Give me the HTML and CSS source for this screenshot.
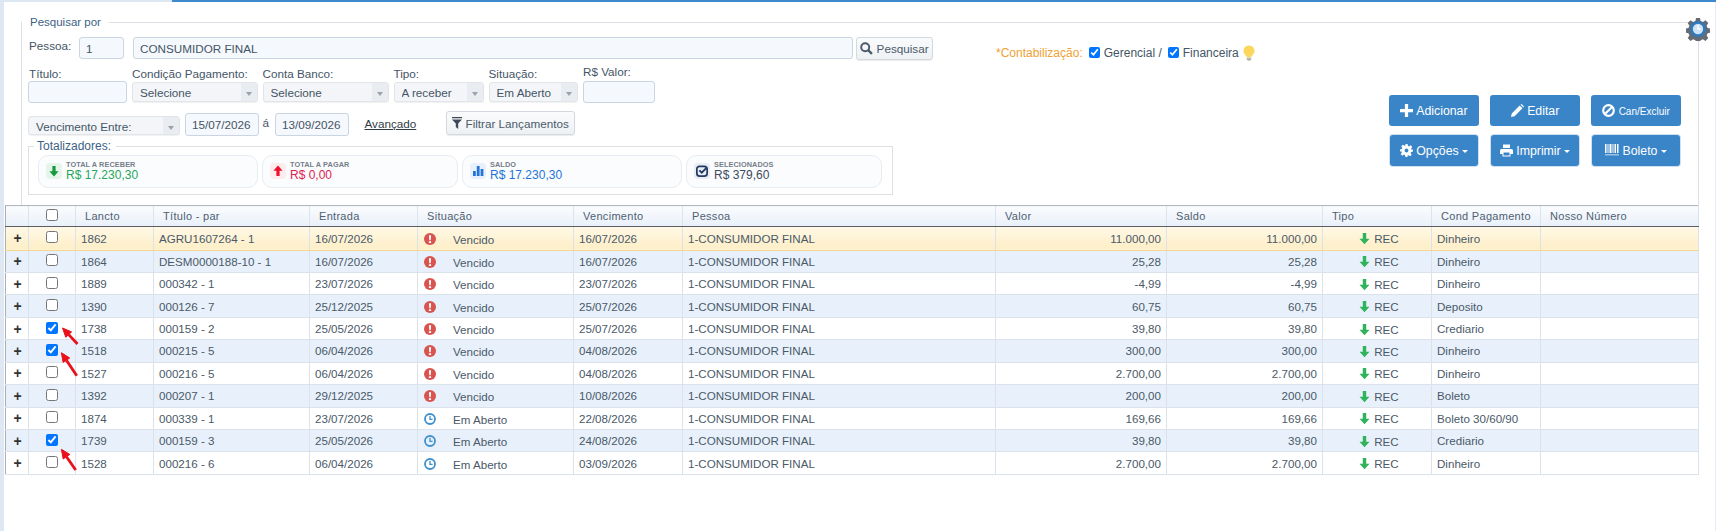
FILE: index.html
```html
<!DOCTYPE html>
<html lang="pt-BR">
<head>
    <meta charset="UTF-8" />
    <meta name="viewport" content="width=device-width, initial-scale=1.0" />
    <title>Lançamentos</title>
    <link rel="stylesheet" href="styles.css">
</head>
<body>
    <svg class="sprite" xmlns="http://www.w3.org/2000/svg">
        <symbol id="i-down" viewBox="0 0 12 12"><path d="M4.4 1h3.2v5.2h3L6 11.4 1.400 6.200h3z"/></symbol>
        <symbol id="i-up" viewBox="0 0 12 12"><path d="M4.400 11h3.200V5.800h3L6 .6 1.400 5.800h3z"/></symbol>
        <symbol id="i-bars" viewBox="0 0 12 12"><path d="M1 6h2.800v5H1zM4.800 1h2.800v10H4.800zM8.600 4h2.800v7H8.600z"/></symbol>
        <symbol id="i-checkbox" viewBox="0 0 14 14"><path d="M5 1.500h4.500A3.500 3.500 0 0 1 13 5v4.500A3.500 3.500 0 0 1 9.500 13H4.500A3.500 3.500 0 0 1 1 9.500V4.500A3 3 0 0 1 4 1.500z" fill="none" stroke="currentColor" stroke-width="2"/><path d="M4 6.200l2.700 2.700L12.500 3" fill="none" stroke="currentColor" stroke-width="2.200"/></symbol>
        <symbol id="i-alert" viewBox="0 0 12 12"><circle cx="6" cy="6" r="6" fill="#d9534f"/><path d="M4.900 2.300h2.200L6.700 7.200H5.300zM4.900 8.200h2.200v1.700H4.900z" fill="#fff"/></symbol>
        <symbol id="i-clock" viewBox="0 0 12 12"><circle cx="6" cy="6" r="5" fill="none" stroke="#3f90cf" stroke-width="1.800"/><path d="M6 3v3.300h2.600" fill="none" stroke="#3f90cf" stroke-width="1.300"/></symbol>
        <symbol id="i-plus" viewBox="0 0 12 12"><path d="M4.500 0h3v4.500H12v3H7.500V12h-3V7.500H0v-3h4.500z"/></symbol>
        <symbol id="i-pencil" viewBox="0 0 12 12"><path d="M0 12l.7-3.300L8 1.400 10.600 4 3.300 11.300zM8.800.6l1-.6 2.200 2.200-.6 1z"/></symbol>
        <symbol id="i-ban" viewBox="0 0 12 12"><circle cx="6" cy="6" r="4.900" fill="none" stroke="currentColor" stroke-width="2"/><path d="M2.700 9.300l6.600-6.600" stroke="currentColor" stroke-width="2"/></symbol>
        <symbol id="i-gear" viewBox="0 0 12 12"><path fill-rule="evenodd" d="M5 0h2l.3 1.700 1.100.5L9.900 1.200l1.400 1.400-1 1.500.5 1.100L12 5v2l-1.700.3-.5 1.100 1 1.500-1.400 1.400-1.500-1-1.100.5L7 12H5l-.3-1.700-1.100-.5-1.500 1L.7 9.400l1-1.500-.5-1.100L0 7V5l1.700-.3.5-1.100-1-1.500L2.600 .7l1.500 1 1.100-.5zM6 4.200a1.800 1.800 0 1 0 0 3.600 1.800 1.800 0 0 0 0-3.600z"/></symbol>
        <symbol id="i-print" viewBox="0 0 13 12"><path fill-rule="evenodd" d="M3 0h7v3.500H3zM1.500 4.500h10A1.500 1.500 0 0 1 13 6v3.500h-2.500V12h-8V9.500H0V6a1.500 1.500 0 0 1 1.500-1.500zM3.500 8v3h6V8z"/></symbol>
        <symbol id="i-barcode" viewBox="0 0 14 12"><path d="M0 0h1.500v9H0zM2.500 0h1v9h-1zM4.500 0h2v9h-2zM7.500 0h1v9h-1zM9.500 0h1.500v9H9.500zM12 0h1.500v9H12zM0 10.500h14v.8H0z"/></symbol>
        <symbol id="i-search" viewBox="0 0 12 12"><circle cx="4.800" cy="4.800" r="3.700" fill="none" stroke="currentColor" stroke-width="1.800"/><path d="M7.500 7.500L11 11" stroke="currentColor" stroke-width="2.200"/></symbol>
        <symbol id="i-filter" viewBox="0 0 10 12"><path d="M0 0h10v1.300H0zM0 2.500h10L6.200 6.500V12L3.800 10V6.500z"/></symbol>
    </svg>

    <div class="top-bar">
        <div class="top-tab"></div>
        <div class="top-line"></div>
    </div>

    <div class="panel">
        <svg class="cog" viewBox="0 0 24 24" xmlns="http://www.w3.org/2000/svg">
            <path fill="#646b73" d="M10 1h4l.6 3 2.300 1 2.600-1.700 2.800 2.800-1.700 2.600 1 2.300 3 .6v4l-3 .6-1 2.300 1.700 2.600-2.800 2.800-2.600-1.700-2.300 1-.6 2.800h-4l-.6-2.800-2.300-1-2.600 1.700-2.800-2.800 1.700-2.600-1-2.300-2.800-.6v-4l2.800-.6 1-2.300-1.700-2.600 2.800-2.800 2.600 1.700 2.300-1z"/>
            <circle cx="12" cy="12" r="8" fill="#3179bd"/>
            <circle cx="12" cy="12" r="5.200" fill="#cfe3f5"/>
            <path d="M12 8v4h2.600" fill="none" stroke="#fff" stroke-width="1.300"/>
        </svg>

        <fieldset class="search-box">
            <legend>Pesquisar por</legend>
            <div class="search-body">
                <div class="filters">
                    <div class="row-pessoa">
                        <label class="lbl-pessoa">Pessoa:</label>
                        <input class="inp inp-cod" type="text" value="1">
                        <input class="inp inp-nome" type="text" value="CONSUMIDOR FINAL">
                        <button class="btn-light btn-pesquisar" type="button"><svg class="ico-13"><use href="#i-search"/></svg> Pesquisar</button>
                    </div>
                    <div class="row-fields">
                        <div class="field f-titulo"><label>Título:</label><input class="inp inp-titulo" type="text"></div>
                        <div class="field f-cond"><label>Condição Pagamento:</label><div class="sel"><select><option>Selecione</option></select></div></div>
                        <div class="field f-banco"><label>Conta Banco:</label><div class="sel"><select><option>Selecione</option></select></div></div>
                        <div class="field f-tipo"><label>Tipo:</label><div class="sel"><select><option>A receber</option></select></div></div>
                        <div class="field f-sit"><label>Situação:</label><div class="sel"><select><option>Em Aberto</option></select></div></div>
                        <div class="field f-valor"><label class="lbl-valor">R$ Valor:</label><input class="inp inp-valor" type="text"></div>
                    </div>
                    <div class="row-dates">
                        <div class="sel sel-venc"><select><option>Vencimento Entre:</option></select></div>
                        <input class="inp inp-date" type="text" value="15/07/2026">
                        <span class="date-sep">á</span>
                        <input class="inp inp-date" type="text" value="13/09/2026">
                        <a class="link-avancado" href="#">Avançado</a>
                        <button class="btn-light btn-filtrar" type="button"><svg class="ico-filter"><use href="#i-filter"/></svg> Filtrar Lançamentos</button>
                    </div>
                    <fieldset class="totals">
                        <legend>Totalizadores:</legend>
                        <div class="totals-row">
                            <div class="card card-a">
                                <span class="card-ico bg-green"><svg class="ico-12 c-green"><use href="#i-down"/></svg></span>
                                <div><div class="card-lbl">TOTAL A RECEBER</div><div class="card-val c-green2">R$ 17.230,30</div></div>
                            </div>
                            <div class="card card-b">
                                <span class="card-ico bg-red"><svg class="ico-12 c-red"><use href="#i-up"/></svg></span>
                                <div><div class="card-lbl">TOTAL A PAGAR</div><div class="card-val c-red2">R$ 0,00</div></div>
                            </div>
                            <div class="card card-a">
                                <span class="card-ico bg-blue"><svg class="ico-12 c-blue"><use href="#i-bars"/></svg></span>
                                <div><div class="card-lbl">SALDO</div><div class="card-val c-blue">R$ 17.230,30</div></div>
                            </div>
                            <div class="card card-b">
                                <span class="card-ico bg-navy"><svg class="ico-12 c-navy"><use href="#i-checkbox"/></svg></span>
                                <div><div class="card-lbl">SELECIONADOS</div><div class="card-val c-dark">R$ 379,60</div></div>
                            </div>
                        </div>
                    </fieldset>
                </div>

                <div class="side">
                    <div class="contab">
                        <span class="contab-lbl">*Contabilização:</span>
                        <input type="checkbox" checked>
                        <span>Gerencial /</span>
                        <input type="checkbox" checked>
                        <span>Financeira</span>
                        <svg class="bulb" viewBox="0 0 12 16" xmlns="http://www.w3.org/2000/svg">
                            <path fill="#fbd75b" d="M6 .5a5.500 5.500 0 0 1 3.300 9.900c-.6.500-.8 1-.9 1.600H3.600c-.1-.6-.3-1.100-.9-1.600A5.500 5.500 0 0 1 6 .5z"/>
                            <path fill="#b9b9a8" d="M3.800 12.500h4.400v2L7 15.700H5l-1.200-1.200z"/>
                        </svg>
                    </div>
                    <div class="actions">
                        <button class="btn" type="button"><svg class="ico-13"><use href="#i-plus"/></svg> Adicionar</button>
                        <button class="btn" type="button"><svg class="ico-13"><use href="#i-pencil"/></svg> Editar</button>
                        <button class="btn" type="button"><svg class="ico-13"><use href="#i-ban"/></svg> <span class="btn-small">Can/Excluir</span></button>
                        <button class="btn btn-menu" type="button"><svg class="ico-13"><use href="#i-gear"/></svg> Opções <i class="caret"></i></button>
                        <button class="btn btn-menu" type="button"><svg class="ico-13"><use href="#i-print"/></svg> Imprimir <i class="caret"></i></button>
                        <button class="btn btn-menu" type="button"><svg class="ico-barcode"><use href="#i-barcode"/></svg> Boleto <i class="caret"></i></button>
                    </div>
                </div>
            </div>
        </fieldset>

        <div class="grid-wrap">
            <table class="grid">
                <colgroup>
                    <col class="c1"><col class="c2"><col class="c3"><col class="c4"><col class="c5"><col class="c6"><col class="c7">
                    <col class="c8"><col class="c9"><col class="c10"><col class="c11"><col class="c12"><col class="c13">
                </colgroup>
                <thead>
                    <tr>
                        <th></th>
                        <th class="t-check"><input type="checkbox"></th>
                        <th>Lancto</th>
                        <th>Título - par</th>
                        <th>Entrada</th>
                        <th>Situação</th>
                        <th>Vencimento</th>
                        <th>Pessoa</th>
                        <th>Valor</th>
                        <th>Saldo</th>
                        <th>Tipo</th>
                        <th>Cond Pagamento</th>
                        <th>Nosso Número</th>
                    </tr>
                </thead>
                <tbody>
                    <tr class="row-active">
                        <td class="t-plus">+</td><td class="t-check"><input type="checkbox"></td><td>1862</td><td>AGRU1607264 - 1</td><td>16/07/2026</td>
                        <td class="t-sit"><svg class="ico-12"><use href="#i-alert"/></svg><span>Vencido</span></td><td>16/07/2026</td><td>1-CONSUMIDOR FINAL</td>
                        <td class="t-num">11.000,00</td><td class="t-num">11.000,00</td><td class="t-tipo"><svg class="ico-tipo c-rec"><use href="#i-down"/></svg> REC</td><td>Dinheiro</td><td></td>
                    </tr>
                    <tr class="row-alt">
                        <td class="t-plus">+</td><td class="t-check"><input type="checkbox"></td><td>1864</td><td>DESM0000188-10 - 1</td><td>16/07/2026</td>
                        <td class="t-sit"><svg class="ico-12"><use href="#i-alert"/></svg><span>Vencido</span></td><td>16/07/2026</td><td>1-CONSUMIDOR FINAL</td>
                        <td class="t-num">25,28</td><td class="t-num">25,28</td><td class="t-tipo"><svg class="ico-tipo c-rec"><use href="#i-down"/></svg> REC</td><td>Dinheiro</td><td></td>
                    </tr>
                    <tr>
                        <td class="t-plus">+</td><td class="t-check"><input type="checkbox"></td><td>1889</td><td>000342 - 1</td><td>23/07/2026</td>
                        <td class="t-sit"><svg class="ico-12"><use href="#i-alert"/></svg><span>Vencido</span></td><td>23/07/2026</td><td>1-CONSUMIDOR FINAL</td>
                        <td class="t-num">-4,99</td><td class="t-num">-4,99</td><td class="t-tipo"><svg class="ico-tipo c-rec"><use href="#i-down"/></svg> REC</td><td>Dinheiro</td><td></td>
                    </tr>
                    <tr class="row-alt">
                        <td class="t-plus">+</td><td class="t-check"><input type="checkbox"></td><td>1390</td><td>000126 - 7</td><td>25/12/2025</td>
                        <td class="t-sit"><svg class="ico-12"><use href="#i-alert"/></svg><span>Vencido</span></td><td>25/07/2026</td><td>1-CONSUMIDOR FINAL</td>
                        <td class="t-num">60,75</td><td class="t-num">60,75</td><td class="t-tipo"><svg class="ico-tipo c-rec"><use href="#i-down"/></svg> REC</td><td>Deposito</td><td></td>
                    </tr>
                    <tr>
                        <td class="t-plus">+</td><td class="t-check"><input type="checkbox" checked></td><td>1738</td><td>000159 - 2</td><td>25/05/2026</td>
                        <td class="t-sit"><svg class="ico-12"><use href="#i-alert"/></svg><span>Vencido</span></td><td>25/07/2026</td><td>1-CONSUMIDOR FINAL</td>
                        <td class="t-num">39,80</td><td class="t-num">39,80</td><td class="t-tipo"><svg class="ico-tipo c-rec"><use href="#i-down"/></svg> REC</td><td>Crediario</td><td></td>
                    </tr>
                    <tr class="row-alt">
                        <td class="t-plus">+</td><td class="t-check"><input type="checkbox" checked></td><td>1518</td><td>000215 - 5</td><td>06/04/2026</td>
                        <td class="t-sit"><svg class="ico-12"><use href="#i-alert"/></svg><span>Vencido</span></td><td>04/08/2026</td><td>1-CONSUMIDOR FINAL</td>
                        <td class="t-num">300,00</td><td class="t-num">300,00</td><td class="t-tipo"><svg class="ico-tipo c-rec"><use href="#i-down"/></svg> REC</td><td>Dinheiro</td><td></td>
                    </tr>
                    <tr>
                        <td class="t-plus">+</td><td class="t-check"><input type="checkbox"></td><td>1527</td><td>000216 - 5</td><td>06/04/2026</td>
                        <td class="t-sit"><svg class="ico-12"><use href="#i-alert"/></svg><span>Vencido</span></td><td>04/08/2026</td><td>1-CONSUMIDOR FINAL</td>
                        <td class="t-num">2.700,00</td><td class="t-num">2.700,00</td><td class="t-tipo"><svg class="ico-tipo c-rec"><use href="#i-down"/></svg> REC</td><td>Dinheiro</td><td></td>
                    </tr>
                    <tr class="row-alt">
                        <td class="t-plus">+</td><td class="t-check"><input type="checkbox"></td><td>1392</td><td>000207 - 1</td><td>29/12/2025</td>
                        <td class="t-sit"><svg class="ico-12"><use href="#i-alert"/></svg><span>Vencido</span></td><td>10/08/2026</td><td>1-CONSUMIDOR FINAL</td>
                        <td class="t-num">200,00</td><td class="t-num">200,00</td><td class="t-tipo"><svg class="ico-tipo c-rec"><use href="#i-down"/></svg> REC</td><td>Boleto</td><td></td>
                    </tr>
                    <tr>
                        <td class="t-plus">+</td><td class="t-check"><input type="checkbox"></td><td>1874</td><td>000339 - 1</td><td>23/07/2026</td>
                        <td class="t-sit"><svg class="ico-12"><use href="#i-clock"/></svg><span>Em Aberto</span></td><td>22/08/2026</td><td>1-CONSUMIDOR FINAL</td>
                        <td class="t-num">169,66</td><td class="t-num">169,66</td><td class="t-tipo"><svg class="ico-tipo c-rec"><use href="#i-down"/></svg> REC</td><td>Boleto 30/60/90</td><td></td>
                    </tr>
                    <tr class="row-alt">
                        <td class="t-plus">+</td><td class="t-check"><input type="checkbox" checked></td><td>1739</td><td>000159 - 3</td><td>25/05/2026</td>
                        <td class="t-sit"><svg class="ico-12"><use href="#i-clock"/></svg><span>Em Aberto</span></td><td>24/08/2026</td><td>1-CONSUMIDOR FINAL</td>
                        <td class="t-num">39,80</td><td class="t-num">39,80</td><td class="t-tipo"><svg class="ico-tipo c-rec"><use href="#i-down"/></svg> REC</td><td>Crediario</td><td></td>
                    </tr>
                    <tr>
                        <td class="t-plus">+</td><td class="t-check"><input type="checkbox"></td><td>1528</td><td>000216 - 6</td><td>06/04/2026</td>
                        <td class="t-sit"><svg class="ico-12"><use href="#i-clock"/></svg><span>Em Aberto</span></td><td>03/09/2026</td><td>1-CONSUMIDOR FINAL</td>
                        <td class="t-num">2.700,00</td><td class="t-num">2.700,00</td><td class="t-tipo"><svg class="ico-tipo c-rec"><use href="#i-down"/></svg> REC</td><td>Dinheiro</td><td></td>
                    </tr>
                </tbody>
            </table>
            <!-- setas vermelhas por cima das linhas marcadas -->
            <svg class="marks" xmlns="http://www.w3.org/2000/svg">
                <g stroke="#e8101a" stroke-width="2.800" fill="#e8101a">
                    <path d="M63.700 129.600L72.500 139"/><path stroke-width="1" d="M57.500 123L60.800 132.300L66.600 126.900z"/>
                    <path d="M61.400 155.200L71.800 170.700"/><path stroke-width="1" d="M56.400 147.700L58.100 157.400L64.700 153z"/>
                    <path d="M61.500 251.700L70.700 265"/><path stroke-width="1" d="M56.400 244.300L58.200 254L64.800 249.400z"/>
                </g>
            </svg>
        </div>
    </div>
</body>
</html>
```

FILE: styles.css
```css
body {
    font-family: "Liberation Sans", Arial, sans-serif;
    font-size: 11.700px;
    color: #445566;
    background: #fff;
    margin: 0;
}
.sprite {
    display: none;
}
.top-bar {
    display: flex;
    height: 2px;
    background: #dde7f1;
}
.top-tab {
    width: 172px;
}
.top-line {
    flex: 1;
    background: #3d8bcd;
}
.panel {
    position: relative;
    border-left: 4px solid #dfe8f2;
    border-right: 1px solid #e6edf4;
    min-height: 529px;
    padding-top: 13px;
    box-sizing: border-box;
}
.cog {
    position: absolute;
    top: 15px;
    left: 1682px;
    width: 24px;
    height: 24px;
}

/* caixa de pesquisa */
.search-box {
    margin: 0 16px 0 17px;
    padding: 8px 0 10px 6px;
    border: 1px solid #dcdfe3;
    border-bottom: none;
    min-width: 0;
}
legend {
    color: #3d5f85;
    font-size: 11.500px;
    line-height: 14px;
    padding: 0 8px;
    margin-left: -6px;
}
.search-body {
    display: flex;
}
.filters {
    width: 968px;
}
.row-pessoa {
    display: flex;
    align-items: flex-start;
    height: 23px;
}
.lbl-pessoa {
    width: 51px;
    padding: 2px 0 0 1px;
    box-sizing: border-box;
    line-height: 14px;
}
.inp {
    height: 22px;
    box-sizing: border-box;
    background: #f5f8fc;
    border: 1px solid #c9d5e2;
    border-radius: 3px;
    padding: 0 6px;
    font-family: inherit;
    font-size: 11.700px;
    color: #445566;
}
.inp-cod {
    width: 45px;
    margin-right: 9px;
}
.inp-nome {
    width: 720px;
    margin-right: 3px;
}
.btn-light {
    background: linear-gradient(#fafbfc, #eef1f4);
    border: 1px solid #d3d9df;
    border-radius: 3px;
    box-shadow: 0 1px 1px rgba(0,0,0,0.08);
    color: #4b5b6b;
    font-family: inherit;
    font-size: 11.700px;
    padding: 0;
    white-space: nowrap;
}
.btn-pesquisar {
    width: 77px;
    height: 23px;
}
.ico-13 {
    width: 13px;
    height: 13px;
    vertical-align: -2px;
    fill: currentColor;
}
.row-fields {
    display: flex;
    gap: 5px;
    margin-top: 6px;
    height: 38px;
}
.field {
    display: flex;
    flex-direction: column;
}
.field label {
    display: block;
    line-height: 14px;
    height: 14px;
    padding-top: 1px;
    white-space: nowrap;
}
.f-titulo { width: 99px; }
.f-cond { width: 125.500px; }
.f-banco { width: 126px; }
.f-tipo { width: 90px; }
.f-sit { width: 89.500px; }
.f-valor { width: 71.500px; }
.f-titulo label { margin-left: 1px; }
.field .lbl-valor {
    margin-top: -2px;
    margin-bottom: 2px;
}
.inp-titulo {
    width: 99px;
    height: 22px;
}
.inp-valor {
    width: 71.500px;
    height: 22px;
}
.sel {
    position: relative;
    height: 20px;
    margin-top: 1px;
}
.sel::before {
    content: "";
    position: absolute;
    top: 1px;
    right: 1px;
    bottom: 1px;
    width: 16px;
    background: #e9ecf0;
    border-radius: 0 3px 3px 0;
}
.sel::after {
    content: "";
    position: absolute;
    top: 10px;
    right: 6px;
    border-top: 4px solid #9aa2aa;
    border-left: 3px solid transparent;
    border-right: 3px solid transparent;
}
.sel select {
    appearance: none;
    display: block;
    width: 100%;
    height: 100%;
    border: 1px solid #e1e5ea;
    border-radius: 3px;
    background: #f3f5f8;
    box-shadow: 0 1px 1px rgba(0,0,0,0.06);
    color: #445566;
    font-family: inherit;
    font-size: 11.700px;
    padding: 1px 0 0 7px;
}
.row-dates {
    display: flex;
    align-items: flex-start;
    height: 25px;
    margin-top: 7px;
}
.sel-venc {
    width: 151.500px;
    height: 19px;
    margin: 5px 5.500px 0 0;
}
.inp-date {
    width: 74px;
    height: 23px;
    margin-top: 2px;
    padding: 0 0 0 6px;
}
.date-sep {
    width: 16px;
    padding: 5px 0 0 3.500px;
    box-sizing: border-box;
    line-height: 14px;
}
.link-avancado {
    margin: 6px 30px 0 15.500px;
    color: #2f3b47;
    line-height: 14px;
}
.btn-filtrar {
    width: 128.500px;
    height: 24px;
}
.ico-filter {
    width: 10px;
    height: 12px;
    vertical-align: -1px;
    fill: #3d4a57;
}

/* totalizadores */
.totals {
    width: 865px;
    box-sizing: border-box;
    margin: 3px 0 0;
    padding: 2px 9px 6px;
    border: 1px solid #dcdfe3;
    min-width: 0;
}
.totals legend {
    font-size: 12px;
    padding: 0 5px 0 3px;
    margin-left: -4px;
}
.totals-row {
    display: flex;
    gap: 4px;
}
.card {
    display: flex;
    align-items: center;
    gap: 4px;
    height: 33px;
    box-sizing: border-box;
    padding: 0 0 0 7px;
    background: #fbfcfe;
    border: 1px solid #e7edf3;
    border-radius: 10px;
}
.card-a { width: 220px; }
.card-b { width: 196px; }
.card-ico {
    display: flex;
    align-items: center;
    justify-content: center;
    width: 16px;
    height: 16px;
    margin-top: -2px;
    border-radius: 4px;
}
.ico-12 {
    width: 12px;
    height: 12px;
    fill: currentColor;
}
.card-lbl {
    font-size: 7.300px;
    font-weight: bold;
    line-height: 8px;
    color: #767e88;
    letter-spacing: 0.1px;
}
.card-val {
    font-size: 12px;
    line-height: 13px;
}
.bg-green { background: #e6f5ea; }
.bg-red { background: #fdecee; }
.bg-blue { background: #e8f0fb; }
.bg-navy { background: #e9edf4; }
.c-green { color: #139a3c; }
.c-green2 { color: #26a65b; }
.c-red { color: #ee0f2d; }
.c-red2 { color: #e0234e; }
.c-blue { color: #2374d8; }
.c-navy { color: #233a63; }
.c-dark { color: #3d4b5c; }
.c-rec { color: #2fb45c; }

/* lado direito */
.side {
    flex: 1;
}
.contab {
    display: flex;
    align-items: center;
    height: 15px;
    margin-top: 8px;
    font-size: 12px;
    color: #445566;
}
.contab-lbl {
    color: #eea236;
}
.contab input {
    width: 11px;
    height: 11px;
    margin: 0 4px 0 6px;
}
.bulb {
    width: 12px;
    height: 16px;
    margin-left: 4px;
}
.actions {
    display: grid;
    grid-template-columns: repeat(3, 90px);
    column-gap: 11px;
    row-gap: 9px;
    margin: 35px 0 0 393px;
}
.btn {
    height: 31px;
    width: 90px;
    background: #3a85c8;
    border: none;
    border-radius: 3px;
    color: #fff;
    font-family: inherit;
    font-size: 12.300px;
    padding: 0;
    white-space: nowrap;
}
.btn-menu {
    width: 88px;
    justify-self: center;
    box-shadow: 0 0 0 1px #cfe0f0;
}
.btn-small {
    font-size: 10px;
}
.ico-barcode {
    width: 14px;
    height: 12px;
    fill: currentColor;
    vertical-align: -1px;
}
.caret {
    display: inline-block;
    vertical-align: 2px;
    border-top: 3px solid #fff;
    border-left: 3px solid transparent;
    border-right: 3px solid transparent;
}

/* grade */
.grid-wrap {
    position: relative;
    margin: 0 16px 0 1px;
}
.grid {
    width: 1693px;
    table-layout: fixed;
    border-collapse: collapse;
    font-size: 11.600px;
}
.c1 { width: 23px; }
.c2 { width: 47px; }
.c3 { width: 78px; }
.c4 { width: 156px; }
.c5 { width: 108px; }
.c6 { width: 156px; }
.c7 { width: 109px; }
.c8 { width: 313px; }
.c9 { width: 171px; }
.c10 { width: 156px; }
.c11 { width: 109px; }
.c12 { width: 109px; }
.c13 { width: 158px; }
.grid th {
    height: 19.500px;
    padding: 0 0 0 9px;
    text-align: left;
    font-size: 11px;
    font-weight: normal;
    letter-spacing: 0.3px;
    color: #4f6072;
    background: linear-gradient(#fbfcfe, #e8f0f9);
    border-top: 1px solid #b5b8bb;
    border-bottom: 1px solid #5b5f63;
    border-left: 1px solid #dce3ea;
    white-space: nowrap;
}
.grid td {
    height: 20.450px;
    padding: 0 5px;
    border: 1px solid #dbe2e9;
    color: #4a5968;
    white-space: nowrap;
}
.grid tbody td:first-child,
.grid thead th:first-child {
    border-left: 1px solid #a9afb6;
}
.grid tbody td:last-child,
.grid thead th:last-child {
    border-right: 1px solid #dbe2e9;
}
.grid input {
    display: block;
    width: 12px;
    height: 12px;
    margin: -2px auto 0;
}
.grid .t-check {
    padding: 0;
}
.grid .t-plus {
    padding: 0 0 0 1px;
    text-align: center;
    font-size: 14px;
    line-height: 14px;
    font-weight: bold;
    color: #333;
}
.grid .t-num {
    text-align: right;
}
.grid .t-sit {
    padding-left: 6px;
}
.t-sit svg {
    vertical-align: -2px;
    margin-right: 17px;
}
.t-sit span {
    position: relative;
    top: 1px;
}
.grid .t-tipo {
    padding: 1px 0 0 35px;
}
.ico-tipo {
    width: 13px;
    height: 13px;
    fill: currentColor;
    vertical-align: -2px;
}
.row-alt td {
    background: #e8f1fb;
}
.grid .row-active td {
    height: 22px;
    background: linear-gradient(#fff8e6, #fdeec6);
    border-bottom: 1px solid #f3d58c;
}
.marks {
    position: absolute;
    top: 0;
    left: 0;
    width: 100%;
    height: 100%;
    pointer-events: none;
}
```
